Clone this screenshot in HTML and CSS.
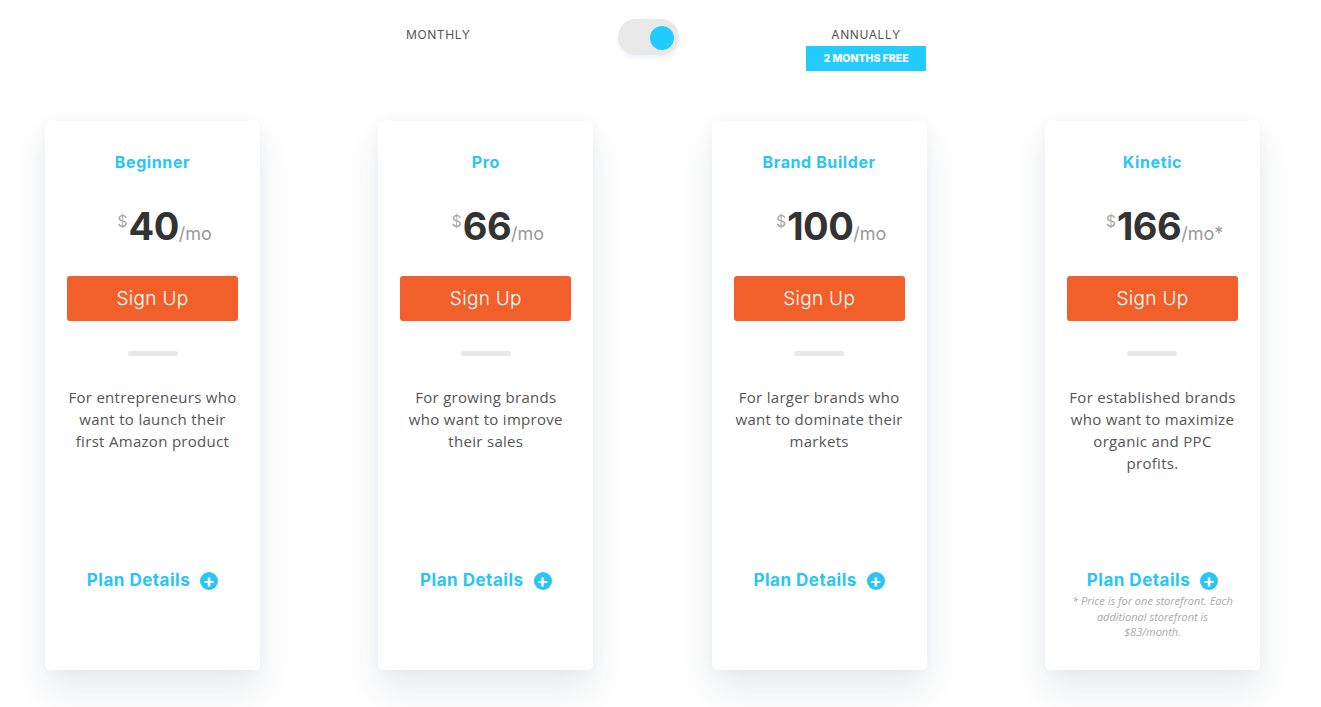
FILE: index.html
```html
<!DOCTYPE html>
<html lang="en">
<head>
  <meta charset="UTF-8">
  <meta name="viewport" content="width=device-width, initial-scale=1.0">
  <title>Pricing</title>
  <link rel="stylesheet" href="styles.css">
</head>
<body>

<!-- billing period switch -->
<div class="period">
  <span class="period-label period-month">Monthly</span>
  <div class="switch"><span class="knob"></span></div>
  <div class="period-annual">
    <span class="period-label">Annually</span>
    <span class="badge">2 Months Free</span>
  </div>
</div>

<!-- plans -->
<div class="plans">
  <div class="card">
    <div class="plan-name">Beginner</div>
    <div class="price"><span class="cur">$</span><span class="amount">40</span><span class="per">/mo</span></div>
    <a class="signup" href="#">Sign Up</a>
    <div class="rule"></div>
    <p class="desc">For entrepreneurs who want to launch their first Amazon product</p>
    <a class="details" href="#">Plan Details <span class="plus">+</span></a>
  </div>

  <div class="card">
    <div class="plan-name">Pro</div>
    <div class="price"><span class="cur">$</span><span class="amount">66</span><span class="per">/mo</span></div>
    <a class="signup" href="#">Sign Up</a>
    <div class="rule"></div>
    <p class="desc">For growing brands who want to improve their sales</p>
    <a class="details" href="#">Plan Details <span class="plus">+</span></a>
  </div>

  <div class="card">
    <div class="plan-name">Brand Builder</div>
    <div class="price"><span class="cur">$</span><span class="amount">100</span><span class="per">/mo</span></div>
    <a class="signup" href="#">Sign Up</a>
    <div class="rule"></div>
    <p class="desc">For larger brands who want to dominate their markets</p>
    <a class="details" href="#">Plan Details <span class="plus">+</span></a>
  </div>

  <div class="card">
    <div class="plan-name">Kinetic</div>
    <div class="price"><span class="cur">$</span><span class="amount">166</span><span class="per">/mo*</span></div>
    <a class="signup" href="#">Sign Up</a>
    <div class="rule"></div>
    <p class="desc">For established brands who want to maximize organic and PPC profits.</p>
    <a class="details" href="#">Plan Details <span class="plus">+</span></a>
    <p class="note">* Price is for one storefront. Each additional storefront is $83/month.</p>
  </div>
</div>

</body>
</html>
```

FILE: styles.css
```css
body {
  margin: 0;
  background: #fff;
  font-family: Inter, "Liberation Sans", sans-serif;
  color: #333;
}

/* 期間切換 */
.period {
  display: flex;
  align-items: flex-start;
  padding: 19px 0 0 406px;
  height: 121px;
  box-sizing: border-box;
}
.period-label {
  display: block;
  font-size: 12px;
  line-height: 14px;
  margin-top: 9px;
  text-transform: uppercase;
  letter-spacing: 0.6px;
  color: #555;
}
.period-month {
  width: 66px;
}
.switch {
  position: relative;
  width: 61px;
  height: 36px;
  margin-left: 146px;
  border-radius: 18px;
  background: #e9e9e9;
  box-shadow: 0 3px 4px rgba(200, 220, 240, 0.35);
}
.knob {
  position: absolute;
  right: 5px;
  top: 7px;
  width: 24px;
  height: 24px;
  border-radius: 50%;
  background: #22ccff;
}
.period-annual {
  display: flex;
  flex-direction: column;
  align-items: center;
  width: 120px;
  margin-left: 127px;
}
.badge {
  display: block;
  width: 120px;
  margin-top: 4px;
  padding: 6px 0;
  background: #22ccff;
  color: #fff;
  font-size: 10.5px;
  line-height: 13px;
  font-weight: 800;
  text-align: center;
  text-transform: uppercase;
}

/* 方案卡片 */
.plans {
  display: flex;
  gap: 118.33px;
  padding-left: 45px;
  padding-bottom: 40px;
}
.card {
  display: flex;
  flex-direction: column;
  align-items: center;
  width: 215px;
  height: 549px;
  box-sizing: border-box;
  padding: 31px 22px 0;
  background: #fff;
  border-radius: 5px;
  box-shadow: 0 20px 34px rgba(40, 60, 90, 0.1), 0 0 14px rgba(40, 60, 90, 0.035);
}
.plan-name {
  font-size: 16px;
  line-height: 20px;
  font-weight: 700;
  color: #29c5f6;
  letter-spacing: 0.6px;
}
.price {
  display: flex;
  align-items: baseline;
  margin-top: 32px;
  padding-left: 24px;
  height: 44px;
}
.cur {
  align-self: flex-start;
  font-size: 16px;
  color: #aaa;
  margin-top: 7px;
  margin-right: 1px;
}
.amount {
  font-size: 38px;
  line-height: 44px;
  font-weight: 700;
  color: #333;
  letter-spacing: -0.5px;
}
.per {
  font-size: 18px;
  color: #999;
}
.signup {
  display: block;
  width: 100%;
  height: 45px;
  margin-top: 28px;
  border-radius: 3px;
  background: #f15f2a;
  color: #fff;
  font-size: 19px;
  font-weight: 300;
  line-height: 45px;
  letter-spacing: 0.3px;
  text-align: center;
  text-decoration: none;
}
.rule {
  width: 50px;
  height: 5px;
  margin-top: 30px;
  border-radius: 3px;
  background: #e6e8ec;
}
.desc {
  height: 183px;
  margin: 30px 0 0;
  font-family: "Open Sans", "Liberation Sans", sans-serif;
  font-size: 15px;
  line-height: 22px;
  color: #555;
  text-align: center;
  letter-spacing: 0.3px;
}
.details {
  display: flex;
  align-items: center;
  gap: 10px;
  font-size: 17px;
  line-height: 22px;
  font-weight: 700;
  color: #29c5f6;
  text-decoration: none;
  letter-spacing: 0.5px;
}
.plus {
  display: inline-block;
  width: 18px;
  height: 18px;
  border-radius: 50%;
  background: #29c5f6;
  color: #fff;
  font-size: 18px;
  line-height: 18px;
  text-align: center;
  font-weight: 700;
  margin-top: 2px;
}
.note {
  max-width: 166px;
  margin: 2px 0 0;
  font-family: "Open Sans", "Liberation Sans", sans-serif;
  font-style: italic;
  font-size: 11px;
  line-height: 15.5px;
  color: #aaa;
  text-align: center;
}
```
